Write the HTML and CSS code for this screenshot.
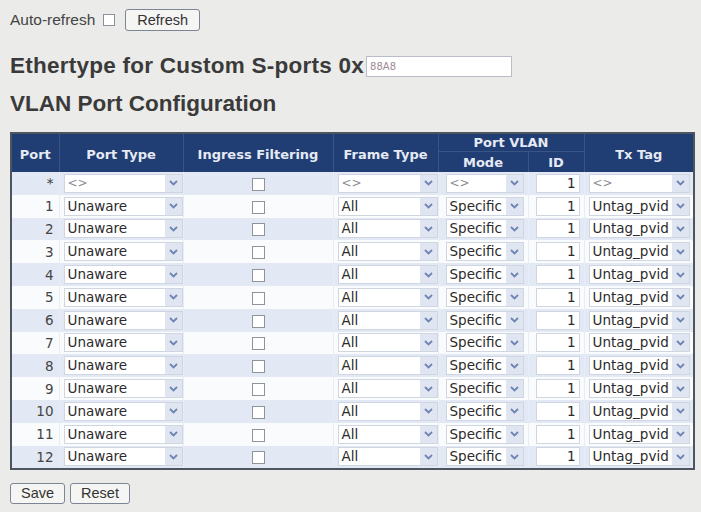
FILE: index.html
```html
<!DOCTYPE html>
<html lang="en">
<head>
    <meta charset="UTF-8">
    <meta name="viewport" content="width=device-width, initial-scale=1.0">
    <title>VLAN Port Configuration</title>
    <link rel="stylesheet" href="styles.css">
</head>
<body>
<div class="page">
    <div class="toolbar">
        <span class="label">Auto-refresh</span>
        <span class="check"></span>
        <button class="btn wide">Refresh</button>
    </div>

    <h1 class="title first">Ethertype for Custom S-ports 0x<span class="text-field">88A8</span></h1>
    <h1 class="title second">VLAN Port Configuration</h1>

    <table class="vlan-table">
        <colgroup>
            <col class="c-port">
            <col class="c-type">
            <col class="c-ingress">
            <col class="c-frame">
            <col class="c-mode">
            <col class="c-id">
            <col class="c-tx">
        </colgroup>
        <thead>
            <tr class="head-top">
                <th rowspan="2">Port</th>
                <th rowspan="2">Port Type</th>
                <th rowspan="2">Ingress Filtering</th>
                <th rowspan="2">Frame Type</th>
                <th colspan="2">Port VLAN</th>
                <th rowspan="2">Tx Tag</th>
            </tr>
            <tr class="head-sub">
                <th>Mode</th>
                <th>ID</th>
            </tr>
        </thead>
        <tbody id="rows"></tbody>
    </table>

    <div class="actions">
        <button class="btn">Save</button>
        <button class="btn">Reset</button>
    </div>
</div>

<script>
    var arrow = '<span class="arrow"><svg width="9" height="6" viewBox="0 0 9 6"><path d="M1 1 L4.5 4.5 L8 1" fill="none" stroke="#7084b4" stroke-width="1.8"/></svg></span>';

    function dropdown(cls, text, muted) {
        return '<span class="select ' + cls + '"><span class="value' + (muted ? ' muted' : '') + '">' + text + '</span>' + arrow + '</span>';
    }

    var rows = [];
    rows.push({ port: '*', type: '&lt;&gt;', frame: '&lt;&gt;', mode: '&lt;&gt;', tx: '&lt;&gt;', muted: true });
    for (var i = 1; i <= 12; i++) {
        rows.push({ port: i, type: 'Unaware', frame: 'All', mode: 'Specific', tx: 'Untag_pvid', muted: false });
    }

    var html = '';
    rows.forEach(function (r, idx) {
        html += '<tr class="' + (idx % 2 === 0 ? 'alt' : '') + '">' +
            '<td class="port">' + r.port + '</td>' +
            '<td class="pad">' + dropdown('w-type', r.type, r.muted) + '</td>' +
            '<td class="center"><span class="check"></span></td>' +
            '<td class="pad">' + dropdown('w-frame', r.frame, r.muted) + '</td>' +
            '<td class="pad-mode">' + dropdown('w-mode', r.mode, r.muted) + '</td>' +
            '<td><span class="num-field">1</span></td>' +
            '<td class="pad">' + dropdown('w-tx', r.tx, r.muted) + '</td>' +
            '</tr>';
    });
    document.getElementById('rows').innerHTML = html;
</script>
</body>
</html>
```

FILE: styles.css
```css
body {
    margin: 0;
    background-color: #ebebe9;
    font-family: 'Liberation Sans', Arial, sans-serif;
    color: #333;
}

.page {
    padding: 9px 10px;
}

.toolbar {
    display: flex;
    align-items: center;
    height: 22px;
}

.toolbar .label {
    font-size: 15.5px;
    color: #444;
    margin-right: 8px;
}

.toolbar .check {
    width: 12px;
    height: 12px;
    margin-right: 10px;
}

.check {
    display: inline-block;
    width: 12px;
    height: 12px;
    border: 1px solid #8a8f98;
    background-color: #fff;
    box-sizing: border-box;
}

.btn {
    font-family: 'Liberation Sans', Arial, sans-serif;
    font-size: 14.5px;
    color: #333;
    background-color: #f5f5f4;
    border: 1px solid #7c8496;
    border-radius: 3px;
    padding: 1px 10px;
    height: 21px;
    line-height: 17px;
}

.btn.wide {
    padding: 1px 11px;
    height: 22px;
}

.title {
    margin: 24px 0 0;
    font-size: 22.5px;
    line-height: 22px;
    font-weight: bold;
    color: #3a3a3a;
    display: flex;
    align-items: center;
}

.title.first {
    letter-spacing: 0.25px;
}

.title.second {
    margin-top: 16px;
}

.text-field {
    display: inline-block;
    width: 146px;
    height: 21px;
    margin-left: 2px;
    box-sizing: border-box;
    border: 1px solid #b9bec6;
    background-color: #fff;
    font-family: 'DejaVu Sans', Verdana, sans-serif;
    font-size: 10px;
    font-weight: normal;
    letter-spacing: 0;
    line-height: 19px;
    padding-left: 3px;
    color: #a08a92;
}

.vlan-table {
    margin-top: 17px;
    border-collapse: collapse;
    table-layout: fixed;
    border: 2px solid #4e5460;
    font-family: 'DejaVu Sans', Verdana, sans-serif;
    font-size: 13.5px;
    width: 685px;
}

.c-port { width: 48px; }
.c-type { width: 124px; }
.c-ingress { width: 150px; }
.c-frame { width: 105px; }
.c-mode { width: 90px; }
.c-id { width: 56px; }
.c-tx { width: 110px; }

.vlan-table th {
    background-color: #203d74;
    color: #e6eaf3;
    font-weight: bold;
    font-size: 13px;
    border-left: 1px solid #3b5486;
    padding: 0;
    text-align: center;
    white-space: nowrap;
}

.head-top th {
    height: 17px;
}

.head-top th[rowspan] {
    padding-top: 2px;
}

.head-sub th {
    height: 20px;
    border-top: 1px solid #3b5486;
}

.vlan-table td {
    height: 22.8px;
    padding: 0;
    background-color: #fafbfd;
    border-left: 1px solid #e8edf5;
}

.vlan-table tr.alt td {
    background-color: #e2e9f4;
}

.vlan-table td.port {
    text-align: right;
    padding-right: 5px;
    color: #444;
    border-left: none;
}

.vlan-table td.pad {
    padding-left: 4px;
}

.vlan-table td.pad-mode {
    padding-left: 7px;
}

.vlan-table td.center {
    text-align: center;
}

.vlan-table td.center .check {
    vertical-align: middle;
    width: 13px;
    height: 13px;
    border-color: #8f949c;
}

.select {
    display: flex;
    align-items: center;
    height: 19px;
    box-sizing: border-box;
    border: 1px solid #d0d6e0;
    background-color: #fff;
    color: #2b2b2b;
}

.select .value {
    flex: 1;
    padding-left: 3px;
    white-space: nowrap;
    overflow: hidden;
    line-height: 17px;
}

.select .value.muted {
    color: #8a8f99;
    font-size: 12px;
}

.select .arrow {
    width: 17px;
    height: 17px;
    display: flex;
    align-items: center;
    justify-content: center;
    background-color: #dfe6f2;
}

.w-type { width: 119px; }
.w-frame { width: 100px; }
.w-mode { width: 78px; }
.w-tx { width: 101px; }

.num-field {
    display: block;
    width: 44px;
    height: 19px;
    margin-left: 7px;
    box-sizing: border-box;
    border: 1px solid #d0d6e0;
    background-color: #fff;
    text-align: right;
    padding-right: 3px;
    line-height: 17px;
    color: #2b2b2b;
}

.actions {
    display: flex;
    gap: 5px;
    margin-top: 13px;
}
```
